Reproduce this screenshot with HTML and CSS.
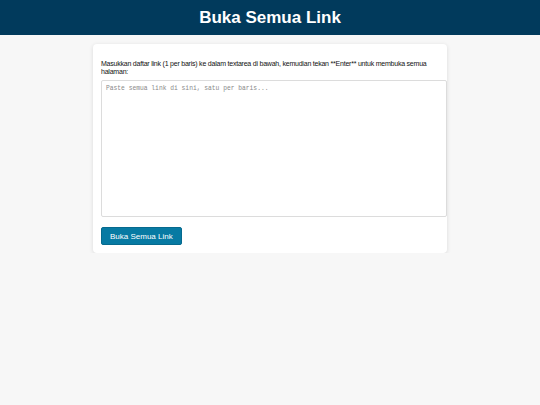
FILE: index.html
```
<!DOCTYPE html>
<html lang="id">
<head>
<meta charset="utf-8">
<title>Buka Semua Link</title>
<link rel="stylesheet" href="styles.css">
</head>
<body>
<header class="top">
  <h1 class="title">Buka Semua Link</h1>
</header>
<main class="card">
  <p class="intro">Masukkan daftar link (1 per baris) ke dalam textarea di bawah, kemudian tekan **Enter** untuk membuka semua halaman:</p>
  <textarea class="links" placeholder="Paste semua link di sini, satu per baris..."></textarea>
  <button class="open">Buka Semua Link</button>
</main>
</body>
</html>
```
FILE: styles.css
```
html, body {
  margin: 0;
  padding: 0;
  background: #f7f7f7;
  font-family: "Liberation Sans", Arial, sans-serif;
}
.top {
  background: #013a5c;
  height: 35px;
  display: flex;
  align-items: center;
  justify-content: center;
}
.title {
  margin: 0;
  color: #ffffff;
  font-size: 17px;
  font-weight: bold;
  font-family: "Liberation Sans", Arial, sans-serif;
}
.card {
  width: 338px;
  margin: 9px auto 0;
  background: #ffffff;
  padding: 8px;
  border-radius: 4px;
  box-shadow: 0 1px 4px rgba(0,0,0,0.12);
}
.intro {
  margin: 8px 0 5px;
  font-size: 7px;
  letter-spacing: -0.22px;
  line-height: 7.5px;
  color: #111;
}
.links {
  display: block;
  width: calc(100% - 2px);
  height: 127px;
  padding: 4px;
  margin: 0 0 10px;
  border: 1px solid #dcdcdc;
  border-radius: 2px;
  font-family: "Liberation Mono", "Courier New", monospace;
  font-size: 6.3px;
  resize: none;
  background: #fff;
}
.links::placeholder {
  color: #8a8a8a;
}
.open {
  display: block;
  background: #077aa3;
  color: #fff;
  border: 1px solid #066a8e;
  border-radius: 2px;
  font-family: "Liberation Sans", Arial, sans-serif;
  font-size: 8px;
  height: 18px;
  padding: 0 8px;
}
```
